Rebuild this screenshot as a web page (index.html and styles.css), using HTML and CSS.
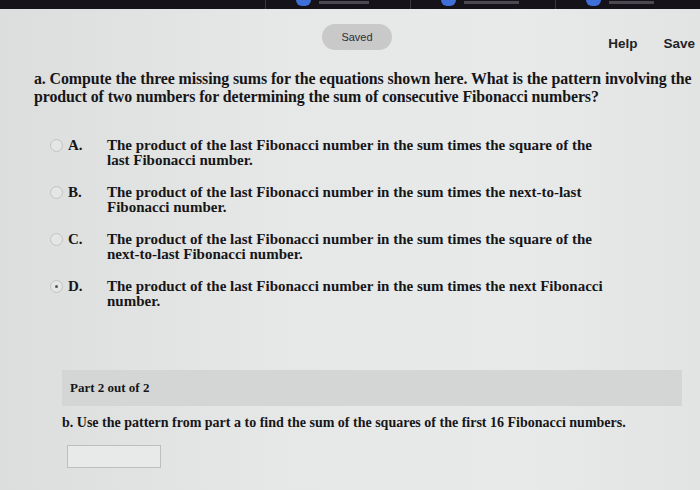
FILE: index.html
```html
<!DOCTYPE html>
<html>
<head>
<meta charset="utf-8">
<link rel="stylesheet" href="styles.css">
</head>
<body>
<div class="screen">
  <div class="topbar">
    <span class="tab"></span>
    <span class="tab"><span class="dot"></span><span class="ghost w1"></span></span>
    <span class="tab"><span class="dot"></span><span class="ghost w2"></span></span>
    <span class="tab"><span class="dot"></span><span class="ghost w3"></span></span>
  </div>
  <div class="header">
    <div class="saved">Saved</div>
    <div class="actions">
      <span class="act">Help</span>
      <span class="act">Save</span>
    </div>
  </div>
  <div class="content">
    <p class="question">a. Compute the three missing sums for the equations shown here. What is the pattern involving the<br>product of two numbers for determining the sum of consecutive Fibonacci numbers?</p>
    <div class="options">
      <div class="option">
        <span class="radio"></span><span class="letter">A.</span>
        <span class="text">The product of the last Fibonacci number in the sum times the square of the<br>last Fibonacci number.</span>
      </div>
      <div class="option">
        <span class="radio"></span><span class="letter">B.</span>
        <span class="text">The product of the last Fibonacci number in the sum times the next-to-last<br>Fibonacci number.</span>
      </div>
      <div class="option">
        <span class="radio"></span><span class="letter">C.</span>
        <span class="text">The product of the last Fibonacci number in the sum times the square of the<br>next-to-last Fibonacci number.</span>
      </div>
      <div class="option">
        <span class="radio checked"></span><span class="letter">D.</span>
        <span class="text">The product of the last Fibonacci number in the sum times the next Fibonacci<br>number.</span>
      </div>
    </div>
    <div class="part">Part 2 out of 2</div>
    <p class="partb">b. Use the pattern from part a to find the sum of the squares of the first 16 Fibonacci numbers.</p>
    <div class="answer"></div>
  </div>
</div>
</body>
</html>
```

FILE: styles.css
```css
html, body {
  margin: 0;
  padding: 0;
}
body {
  width: 700px;
  height: 490px;
  overflow: hidden;
  background: #e3e5e5;
}
.screen {
  width: 700px;
  height: 490px;
  background: linear-gradient(90deg, #dcdddd 0%, #e6e7e7 40%, #e8eaea 75%, #e2e4e4 100%);
  display: flex;
  flex-direction: column;
}
.topbar {
  height: 9px;
  flex: none;
  background: #15121a;
  display: flex;
  padding-left: 265px;
}
.tab {
  width: 148px;
  border-left: 1px solid #3a3840;
  display: flex;
  align-items: flex-start;
  padding-left: 30px;
  gap: 8px;
  box-sizing: border-box;
}
.tab:first-child {
  width: 0;
  padding: 0;
  border: 0;
}
.dot {
  width: 15px;
  height: 6px;
  background: #3f6fd8;
  border-radius: 0 0 7px 7px;
}
.ghost {
  height: 3px;
  margin-top: 1px;
  background: #4a4850;
}
.w1 { width: 50px; }
.w2 { width: 55px; }
.w3 { width: 45px; }
.header {
  display: flex;
  align-items: flex-start;
  padding-left: 322px;
  padding-right: 5px;
  height: 61px;
  flex: none;
  box-sizing: border-box;
  padding-top: 15px;
}
.saved {
  width: 70px;
  height: 26px;
  border-radius: 13px;
  background: #c9c9ca;
  color: #2e2e33;
  font-family: "Liberation Sans", Arial, sans-serif;
  font-size: 11px;
  display: flex;
  align-items: center;
  justify-content: center;
}
.actions {
  margin-left: auto;
  display: flex;
  gap: 26px;
  padding-top: 12px;
}
.act {
  font-family: "Liberation Sans", Arial, sans-serif;
  font-weight: bold;
  font-size: 13.5px;
  color: #232325;
}
.content {
  padding-left: 34px;
  padding-right: 4px;
  font-family: "Liberation Serif", "Times New Roman", serif;
  font-weight: bold;
  color: #161618;
}
.question {
  margin: 0;
  font-size: 15.9px;
  line-height: 18px;
  letter-spacing: -0.1px;
  white-space: nowrap;
}
.options {
  margin-top: 32px;
  display: flex;
  flex-direction: column;
  gap: 17px;
  padding-left: 16px;
}
.option {
  display: flex;
  align-items: flex-start;
  font-size: 15px;
  line-height: 15px;
  white-space: nowrap;
}
.radio {
  width: 11px;
  height: 11px;
  border-radius: 50%;
  border: 1px solid #c2c3c5;
  background: #e4e5e5;
  margin-top: 1px;
  flex: none;
  position: relative;
}
.radio.checked::after {
  content: "";
  position: absolute;
  left: 4px;
  top: 4px;
  width: 3px;
  height: 3px;
  border-radius: 50%;
  background: #555;
}
.letter {
  width: 39px;
  padding-left: 5px;
  flex: none;
}
.text {
  display: block;
}
.part {
  margin-top: 61px;
  margin-left: 28px;
  margin-right: 14px;
  height: 36px;
  background: #d4d6d6;
  font-size: 13px;
  display: flex;
  align-items: center;
  padding-left: 8px;
}
.partb {
  margin: 9px 0 0 28px;
  font-size: 14px;
  line-height: 16px;
  white-space: nowrap;
}
.answer {
  margin: 14px 0 0 33px;
  width: 92px;
  height: 21px;
  border: 1px solid #bdbfbf;
  background: #e8e9e9;
}
```
